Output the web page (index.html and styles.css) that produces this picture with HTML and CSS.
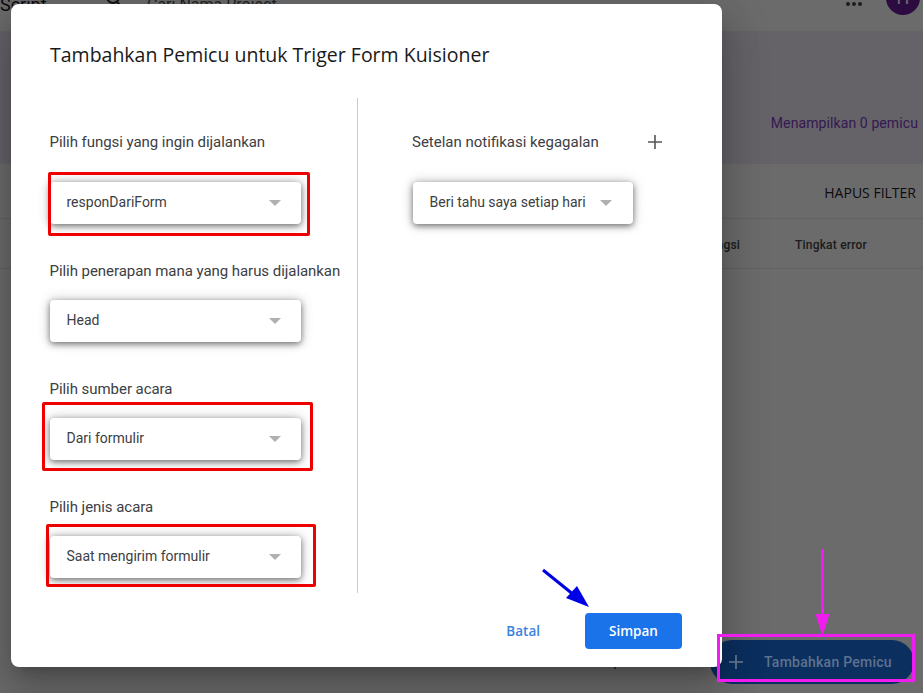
FILE: index.html
```html
<!DOCTYPE html>
<html>
	<head>
		<meta charset="utf-8">
		<title>Tambahkan Pemicu</title>
		<link rel="stylesheet" href="styles.css">
	</head>
	<body>
		<!-- halaman di belakang dialog -->
		<div class="page">
			<div class="topbar">
				<span class="brand">Script</span>
				<svg class="search-icon" width="24" height="24" viewBox="0 0 24 24"><circle cx="10" cy="8" r="6" fill="none" stroke="#333" stroke-width="2"/><path d="M14 13l6 6" stroke="#333" stroke-width="2"/></svg>
				<span class="search-text">Cari Nama Project</span>
				<span class="dots"><i></i><i></i><i></i></span>
				<span class="avatar">H</span>
			</div>
			<div class="hero">
				<span class="hero-count">Menampilkan 0 pemicu</span>
			</div>
			<div class="filterbar">HAPUS FILTER</div>
			<div class="table-head">
				<span class="col-fungsi">Fungsi</span>
				<span class="col-error">Tingkat error</span>
			</div>
		</div>
		<div class="scrim"></div>

		<button class="fab">
			<svg width="16" height="16" viewBox="0 0 16 16"><path d="M8 1v14M1 8h14" stroke="#6f8099" stroke-width="1.6"/></svg>
			<span>Tambahkan Pemicu</span>
		</button>

		<!-- dialog -->
		<div class="dialog">
			<h1 class="dialog-title">Tambahkan Pemicu untuk Triger Form Kuisioner</h1>
			<div class="dialog-body">
				<div class="col-left">
					<div class="field field-first">
						<label>Pilih fungsi yang ingin dijalankan</label>
						<div class="select"><span>responDariForm</span><i class="caret"></i></div>
					</div>
					<div class="field">
						<label>Pilih penerapan mana yang harus dijalankan</label>
						<div class="select"><span>Head</span><i class="caret"></i></div>
					</div>
					<div class="field">
						<label>Pilih sumber acara</label>
						<div class="select"><span>Dari formulir</span><i class="caret"></i></div>
					</div>
					<div class="field">
						<label>Pilih jenis acara</label>
						<div class="select"><span>Saat mengirim formulir</span><i class="caret"></i></div>
					</div>
				</div>
				<div class="col-right">
					<div class="notif-head">
						<label>Setelan notifikasi kegagalan</label>
						<svg width="14" height="14" viewBox="0 0 14 14"><path d="M7 0v14M0 7h14" stroke="#555" stroke-width="1.6"/></svg>
					</div>
					<div class="select select-small"><span>Beri tahu saya setiap hari</span><i class="caret"></i></div>
				</div>
			</div>
			<div class="dialog-actions">
				<button class="btn-text">Batal</button>
				<button class="btn-primary">Simpan</button>
			</div>
		</div>

		<!-- coretan di atas screenshot -->
		<div class="mark mark-1"></div>
		<div class="mark mark-2"></div>
		<div class="mark mark-3"></div>
		<div class="mark-pink"></div>
		<div class="tick"></div>
		<svg class="arrows" width="923" height="693" viewBox="0 0 923 693">
			<path d="M543 570L574 595" stroke="#0000e6" stroke-width="3"/>
			<path d="M589 607L566 598L577 586Z" fill="#0000e6"/>
			<path d="M822.5 549V620" stroke="#f01cf0" stroke-width="3"/>
			<path d="M815.5 614H829.5L822.5 636Z" fill="#f01cf0"/>
		</svg>
	</body>
</html>
```

FILE: styles.css
```css
*{
	margin: 0;
	padding: 0;
	box-sizing: border-box;
}
html,body{
	width: 923px;
	height: 693px;
	overflow: hidden;
}
body{
	position: relative;
	font-family: "Roboto", "Liberation Sans", sans-serif;
	color: #202124;
	background-color: #fff;
}
button{
	border: 0;
	font-family: inherit;
	cursor: pointer;
}

/* halaman belakang */
.page{
	display: flex;
	flex-direction: column;
	height: 100%;
}
.topbar{
	display: flex;
	align-items: center;
	flex: none;
	height: 49px;
	margin-top: -18px;
	padding-bottom: 5px;
	background-color: #fff;
}
.brand{
	width: 103px;
	font-size: 18px;
}
.search-icon{
	margin-right: 20px;
	margin-top: -6px;
}
.search-text{
	flex: 1;
	font-size: 16px;
	color: #555;
}
.dots{
	display: flex;
	gap: 2px;
	margin-right: 24px;
}
.dots i{
	width: 4px;
	height: 4px;
	border-radius: 50%;
	background-color: #444;
}
.avatar{
	width: 34px;
	height: 34px;
	margin-right: 3px;
	margin-top: -12px;
	border-radius: 50%;
	background-color: #6a1b9a;
	color: #fff;
	font-size: 18px;
	text-align: center;
	line-height: 34px;
}
.hero{
	display: flex;
	align-items: center;
	justify-content: flex-end;
	height: 133px;
	padding-right: 5px;
	padding-top: 50px;
	background-color: #f0e9f7;
	font-size: 14px;
	letter-spacing: .1px;
	color: #7b3fc4;
}
.filterbar{
	height: 55px;
	padding-right: 7px;
	padding-top: 19px;
	text-align: right;
	font-family: "Open Sans", "Roboto", sans-serif;
	font-size: 14px;
	font-weight: 500;
	border-bottom: 1px solid #e8eaed;
}
.table-head{
	display: flex;
	align-items: center;
	height: 50px;
	padding-top: 2px;
	font-size: 12px;
	font-weight: 500;
	letter-spacing: .2px;
	color: #444;
	border-bottom: 1px solid #e8eaed;
}
.col-fungsi{
	margin-left: 703px;
	width: 92px;
}
.scrim{
	position: absolute;
	inset: 0;
	background-color: rgba(0,0,0,.58);
}
.fab{
	position: absolute;
	left: 710px;
	top: 640px;
	width: 204px;
	height: 44px;
	display: flex;
	align-items: center;
	gap: 20px;
	padding-left: 18px;
	border-radius: 22px;
	background-color: #0b2f5f;
	color: #5e7290;
	font-size: 14px;
	font-weight: 500;
	letter-spacing: .25px;
}

/* dialog */
.dialog{
	position: absolute;
	left: 11px;
	top: 4px;
	width: 711px;
	height: 663px;
	display: flex;
	flex-direction: column;
	padding: 0 40px 18px 39px;
	background-color: #fff;
	border-radius: 8px;
	box-shadow: 0 11px 15px -7px rgba(0,0,0,.2), 0 24px 38px 3px rgba(0,0,0,.14), 0 9px 46px 8px rgba(0,0,0,.12);
}
.dialog-title{
	height: 94px;
	padding-top: 38px;
	font-family: "Open Sans", "Roboto", sans-serif;
	font-size: 19.5px;
	line-height: 26px;
	font-weight: 500;
	color: #1a1a1a;
}
.dialog-body{
	display: flex;
	height: 495px;
}
.col-left{
	width: 308px;
	border-right: 1px solid #ccc;
}
.col-right{
	padding-left: 55px;
	padding-top: 34px;
}
label{
	display: block;
	font-size: 15px;
	line-height: 20px;
	color: #3c4043;
}
.field{
	margin-bottom: 37px;
}
.field label{
	margin-bottom: 19px;
	margin-left: -.5px;
	white-space: nowrap;
	letter-spacing: -.05px;
}
.field-first{
	padding-top: 34px;
}
.field-first label{
	margin-bottom: 30px;
}
.select{
	display: flex;
	align-items: center;
	justify-content: space-between;
	width: 251px;
	height: 42px;
	padding: 0 20px 2px 16.5px;
	border-radius: 4px;
	background-color: #fff;
	font-size: 14px;
	color: #3c4043;
	box-shadow: 0 2px 6px rgba(0,0,0,.5), 0 0 14px rgba(0,0,0,.2);
}
.select-small{
	width: 220px;
	padding-right: 21px;
}
.caret{
	width: 0;
	height: 0;
	margin-top: 2px;
	border-left: 6px solid transparent;
	border-right: 6px solid transparent;
	border-top: 6px solid #b0b0b0;
}
.notif-head{
	display: flex;
	align-items: center;
	gap: 49px;
	margin-bottom: 30px;
	margin-left: -1px;
}
.dialog-actions{
	display: flex;
	justify-content: flex-end;
	align-items: center;
	gap: 45px;
	margin-top: 20px;
}
.btn-text{
	background: none;
	color: #3b82e0;
	font-family: "Open Sans", "Roboto", sans-serif;
	font-size: 13.5px;
	font-weight: 600;
}
.btn-primary{
	width: 97px;
	height: 36px;
	border-radius: 4px;
	background-color: #1a73e8;
	color: #fff;
	font-family: "Open Sans", "Roboto", sans-serif;
	font-size: 13.5px;
	font-weight: 600;
}

/* tanda merah dan pink */
.mark{
	position: absolute;
	border: 3px solid #ee0000;
	border-radius: 2px;
}
.mark-1{
	left: 48px;
	top: 172px;
	width: 262px;
	height: 64px;
}
.mark-2{
	left: 42px;
	top: 402px;
	width: 271px;
	height: 69px;
}
.mark-3{
	left: 46px;
	top: 524px;
	width: 270px;
	height: 63px;
}
.mark-pink{
	position: absolute;
	left: 717px;
	top: 634px;
	width: 198px;
	height: 48px;
	border: 3px solid #f01cf0;
}
.tick{
	position: absolute;
	left: 614px;
	top: 667px;
	width: 2px;
	height: 2px;
	background-color: #222;
}
.arrows{
	position: absolute;
	left: 0;
	top: 0;
}
```
